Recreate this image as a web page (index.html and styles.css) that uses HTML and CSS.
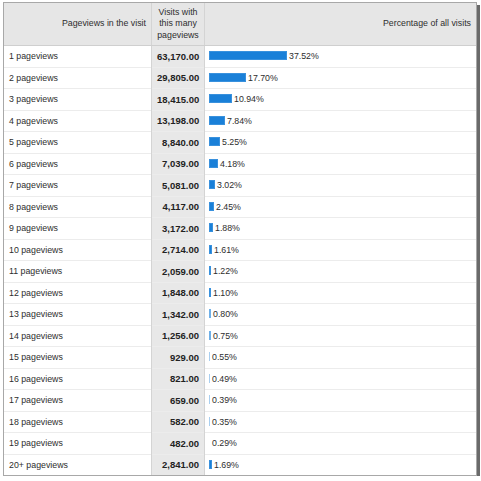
FILE: index.html
```html
<!DOCTYPE html>
<html lang="en">
<head>
    <meta charset="UTF-8">
    <title>Pageviews in the visit</title>
    <link rel="stylesheet" href="styles.css">
</head>
<body>
    <div class="frame">
        <table class="report">
            <thead>
                <tr>
                    <th class="col-name">Pageviews in the visit</th>
                    <th class="col-visits">Visits with<br>this many<br>pageviews</th>
                    <th class="col-pct">Percentage of all visits</th>
                </tr>
            </thead>
            <tbody>
                <tr><td class="col-name">1 pageviews</td><td class="col-visits">63,170.00</td><td class="col-pct"><span class="bar" style="width: 78px"></span>37.52%</td></tr>
                <tr><td class="col-name">2 pageviews</td><td class="col-visits">29,805.00</td><td class="col-pct"><span class="bar" style="width: 37px"></span>17.70%</td></tr>
                <tr><td class="col-name">3 pageviews</td><td class="col-visits">18,415.00</td><td class="col-pct"><span class="bar" style="width: 23px"></span>10.94%</td></tr>
                <tr><td class="col-name">4 pageviews</td><td class="col-visits">13,198.00</td><td class="col-pct"><span class="bar" style="width: 16px"></span>7.84%</td></tr>
                <tr><td class="col-name">5 pageviews</td><td class="col-visits">8,840.00</td><td class="col-pct"><span class="bar" style="width: 11px"></span>5.25%</td></tr>
                <tr><td class="col-name">6 pageviews</td><td class="col-visits">7,039.00</td><td class="col-pct"><span class="bar" style="width: 9px"></span>4.18%</td></tr>
                <tr><td class="col-name">7 pageviews</td><td class="col-visits">5,081.00</td><td class="col-pct"><span class="bar" style="width: 6px"></span>3.02%</td></tr>
                <tr><td class="col-name">8 pageviews</td><td class="col-visits">4,117.00</td><td class="col-pct"><span class="bar" style="width: 5px"></span>2.45%</td></tr>
                <tr><td class="col-name">9 pageviews</td><td class="col-visits">3,172.00</td><td class="col-pct"><span class="bar" style="width: 4px"></span>1.88%</td></tr>
                <tr><td class="col-name">10 pageviews</td><td class="col-visits">2,714.00</td><td class="col-pct"><span class="bar" style="width: 3px"></span>1.61%</td></tr>
                <tr><td class="col-name">11 pageviews</td><td class="col-visits">2,059.00</td><td class="col-pct"><span class="bar" style="width: 2px"></span>1.22%</td></tr>
                <tr><td class="col-name">12 pageviews</td><td class="col-visits">1,848.00</td><td class="col-pct"><span class="bar" style="width: 2px"></span>1.10%</td></tr>
                <tr><td class="col-name">13 pageviews</td><td class="col-visits">1,342.00</td><td class="col-pct"><span class="bar thin" style="width: 2px"></span>0.80%</td></tr>
                <tr><td class="col-name">14 pageviews</td><td class="col-visits">1,256.00</td><td class="col-pct"><span class="bar thin" style="width: 2px"></span>0.75%</td></tr>
                <tr><td class="col-name">15 pageviews</td><td class="col-visits">929.00</td><td class="col-pct"><span class="bar faint" style="width: 1px"></span>0.55%</td></tr>
                <tr><td class="col-name">16 pageviews</td><td class="col-visits">821.00</td><td class="col-pct"><span class="bar faint" style="width: 1px"></span>0.49%</td></tr>
                <tr><td class="col-name">17 pageviews</td><td class="col-visits">659.00</td><td class="col-pct"><span class="bar faint" style="width: 1px"></span>0.39%</td></tr>
                <tr><td class="col-name">18 pageviews</td><td class="col-visits">582.00</td><td class="col-pct"><span class="bar faint" style="width: 1px"></span>0.35%</td></tr>
                <tr><td class="col-name">19 pageviews</td><td class="col-visits">482.00</td><td class="col-pct"><span class="bar none" style="width: 1px"></span>0.29%</td></tr>
                <tr><td class="col-name">20+ pageviews</td><td class="col-visits">2,841.00</td><td class="col-pct"><span class="bar" style="width: 3px"></span>1.69%</td></tr>
            </tbody>
        </table>
    </div>
</body>
</html>
```

FILE: styles.css
```css
body {
    margin: 0;
    background-color: #ffffff;
    font-family: "Liberation Sans", Arial, sans-serif;
    font-size: 8.8px;
    color: #2e2e2e;
}

.frame {
    margin: 2px 0 0 3px;
    width: 472px;
    border: 1px solid #a8a8a8;
    box-shadow: 3px 3px 0 #6a6a6a;
    background-color: #ffffff;
}

.report {
    width: 100%;
    border-collapse: collapse;
    table-layout: fixed;
}

.report th {
    background-color: #e6e6e6;
    font-weight: normal;
    height: 42px;
    padding: 0 5px;
    border-bottom: 1px solid #cfcfcf;
    line-height: 11.5px;
}

.report td {
    height: 20.5px;
    padding: 0 5px;
    border-top: 1px solid #ececec;
    white-space: nowrap;
}

.report tbody tr:first-child td {
    border-top: none;
}

.col-name {
    width: 137px;
    text-align: right;
}

.report td.col-name {
    text-align: left;
}

.col-visits {
    width: 42px;
    border-left: 1px solid #d4d4d4;
    border-right: 1px solid #d4d4d4;
    background-color: #e8e8e8;
    text-align: right;
}

.report th.col-visits {
    text-align: center;
}

.report td.col-visits {
    font-weight: bold;
    font-size: 9.5px;
    color: #222222;
}

.col-pct {
    text-align: right;
}

.report td.col-pct {
    text-align: left;
    padding-left: 4px;
    font-size: 8.8px;
}

.bar {
    display: inline-block;
    height: 9px;
    margin-right: 2px;
    vertical-align: -1px;
    background-color: #1a80d8;
    box-shadow: inset 0 0 0 1px #3991dd;
}

.bar.thin {
    background-color: #6fb0e8;
    box-shadow: none;
}

.bar.faint {
    background-color: #a9cff0;
    box-shadow: none;
}

.bar.none {
    background-color: transparent;
    box-shadow: none;
}
```
